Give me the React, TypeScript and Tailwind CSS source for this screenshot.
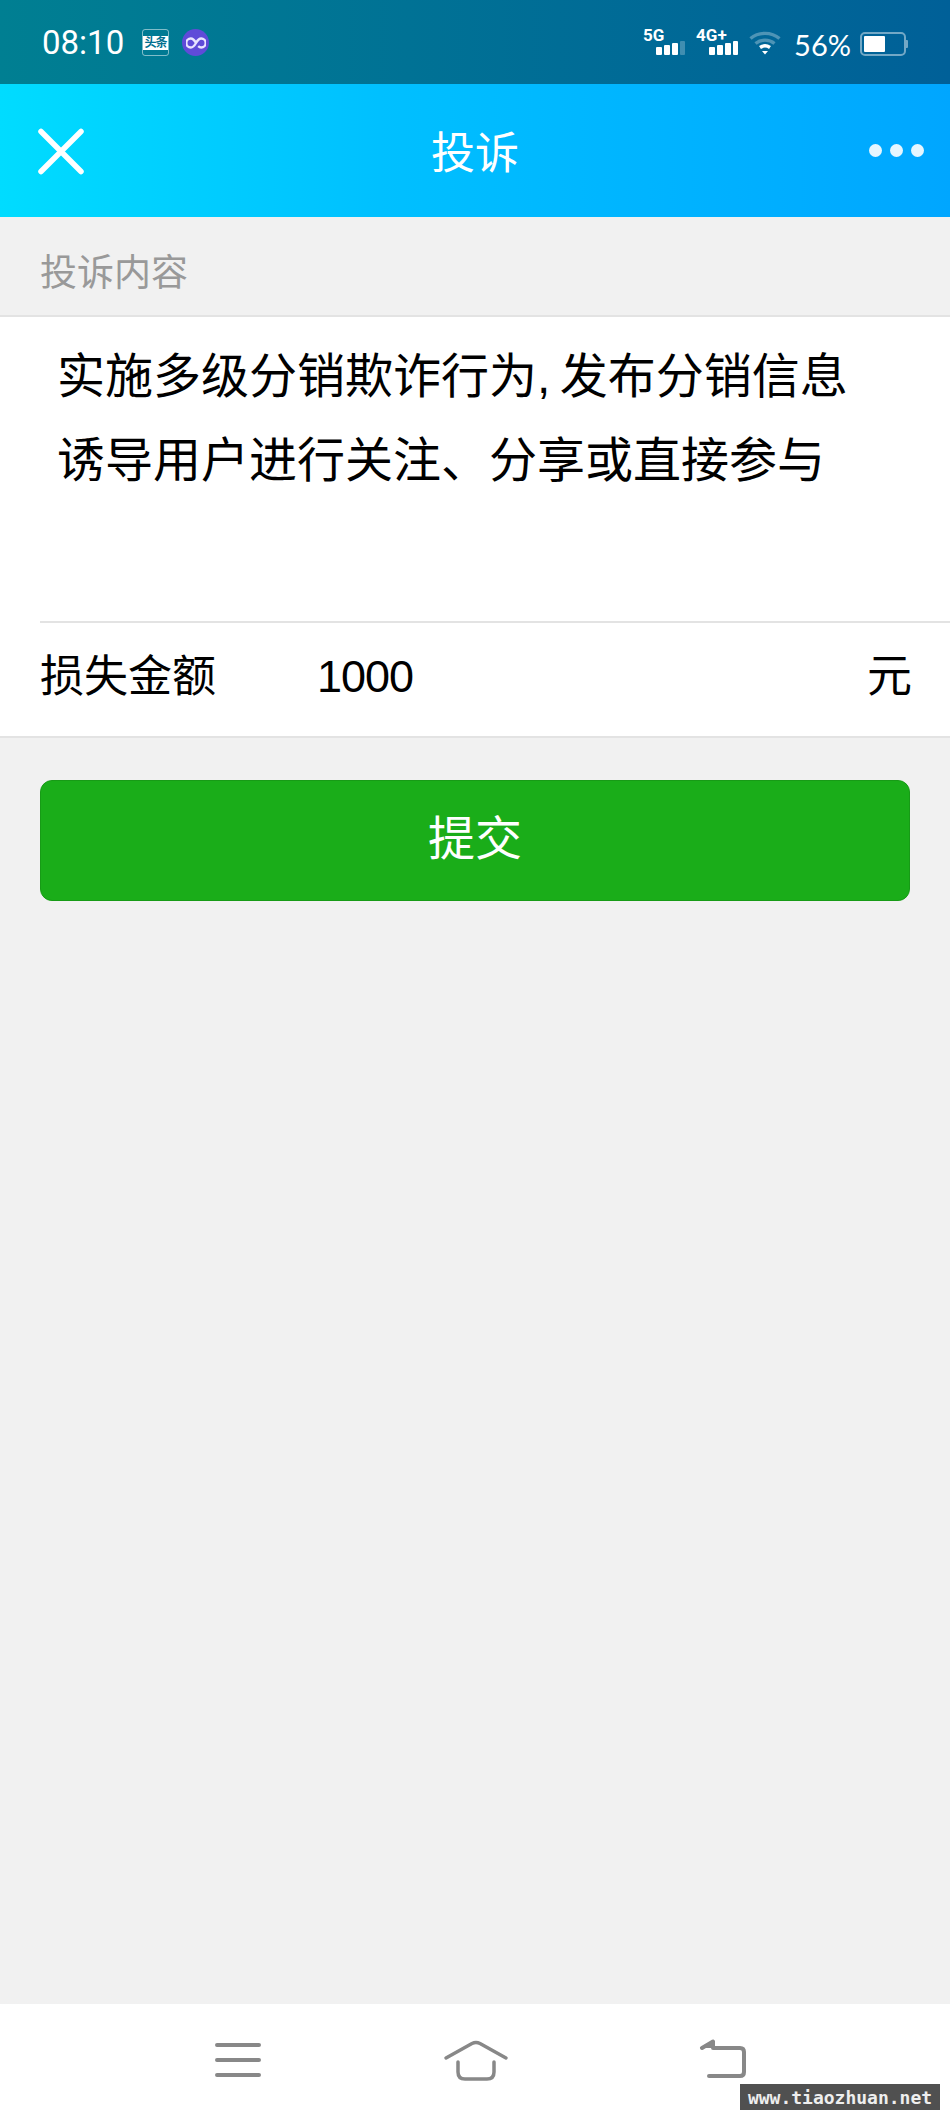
const cjk = "font-['Liberation_Sans','Noto_Sans_CJK_SC',sans-serif]"

function SignalBars({ dim }: { dim?: boolean }) {
  return (
    <div className="flex items-end gap-[2px]">
      <div className="h-[8px] w-[6px] rounded-[1px] bg-white" />
      <div className="h-[10px] w-[6px] rounded-[1px] bg-white" />
      <div className="h-[12px] w-[6px] rounded-[1px] bg-white" />
      <div className={dim ? 'h-[14px] w-[5px] rounded-[1px] bg-white/25' : 'h-[14px] w-[5px] rounded-[1px] bg-white'} />
    </div>
  )
}

function StatusBar() {
  return (
    <div className="flex h-[84px] items-start bg-gradient-to-r from-[#007f92] to-[#006098] pl-[42px] pr-[42px] pt-[29px] text-white">
      <span className="mt-[-5px] w-[100px] font-['Roboto',sans-serif] text-[33px] leading-[37px]">08:10</span>
      <div className="flex h-[27px] w-[27px] flex-col justify-center rounded-[3px] border border-white/50">
        <div className={`bg-white text-center text-[12px] font-bold leading-[14px] tracking-[-1px] text-[#006f8f] ${cjk}`}>头条</div>
      </div>
      <div className="ml-[13px] flex h-[27px] w-[27px] items-center justify-center rounded-full bg-[#5f4bd8]">
        <svg width="20" height="12" viewBox="0 0 20 12" fill="none" stroke="#e8e4ff" strokeWidth="2.4">
          <path d="M10 6C8 2.5 6.5 1.5 4.8 1.5a4.5 4.5 0 0 0 0 9C6.5 10.500 8 9.500 10 6s3.500-4.500 5.200-4.500a4.500 4.500 0 0 1 0 9c-1 0-2-.4-3-1.300" />
        </svg>
      </div>

      <div className="ml-auto flex items-start">
        <div className="relative h-[27px] w-[42px]">
          <span className="absolute left-0 top-[-4px] font-['Roboto',sans-serif] text-[17px] font-bold leading-[20px]">5G</span>
          <div className="absolute bottom-[1px] right-0"><SignalBars dim /></div>
        </div>
        <div className="relative ml-[11px] h-[27px] w-[42px]">
          <span className="absolute left-0 top-[-4px] font-['Roboto',sans-serif] text-[17px] font-bold leading-[20px]">4G+</span>
          <div className="absolute bottom-[1px] right-0"><SignalBars /></div>
        </div>
        <svg className="ml-[11px] mt-[2px]" width="32" height="24" viewBox="0 0 32 24" fill="none" stroke="#fff" strokeWidth="3.4">
          <path d="M1.500 7.500C9.500 .6 22.500 .6 30.500 7.500" strokeOpacity=".3" />
          <path d="M6.500 12.500C12 8 20 8 25.500 12.500" strokeOpacity=".3" />
          <path d="M11 16.500C14 14.500 18 14.500 21 16.500" />
          <path d="M13 20h6l-3 3.500z" fill="#fff" stroke="none" />
        </svg>
        <span className="ml-[13px] font-['Lato',sans-serif] text-[29px] leading-[32px]">56%</span>
        <div className="ml-[9px] mt-[3px] flex items-center">
          <div className="h-[24px] w-[46px] rounded-[5px] border-2 border-white/45 p-[2px]">
            <div className="h-full w-[21px] rounded-[1px] bg-white" />
          </div>
          <div className="h-[8px] w-[2px] rounded-r-[1px] bg-white/45" />
        </div>
      </div>
    </div>
  )
}

function Header() {
  return (
    <div className="relative flex h-[133px] items-center justify-between bg-gradient-to-r from-[#00dcff] via-[#00c0ff] via-40% to-[#00a6ff] pl-[36px] pr-[26px]">
      <svg width="50" height="50" viewBox="0 0 50 50" fill="none" stroke="#fff" strokeWidth="5.500" strokeLinecap="round">
        <path d="M5 5.500 45 45.500M45 5.500 5 45.500" />
      </svg>
      <span className={`absolute inset-x-0 top-[42px] text-center text-[44px] leading-[56px] text-white ${cjk}`}>投诉</span>
      <div className="flex gap-[8px]">
        <div className="h-[13px] w-[13px] rounded-full bg-[#e6f6ff]" />
        <div className="h-[13px] w-[13px] rounded-full bg-[#e6f6ff]" />
        <div className="h-[13px] w-[13px] rounded-full bg-[#e6f6ff]" />
      </div>
    </div>
  )
}

function BottomNav() {
  return (
    <div className="relative flex h-[111px] items-start bg-white pl-[214px] pt-[34px]">
      <svg width="48" height="42" viewBox="0 0 48 42" fill="none" stroke="#888" strokeWidth="4" strokeLinecap="round">
        <path d="M3 7h42M3 22h42M3 37h42" />
      </svg>
      <svg className="ml-[181px] mt-[1px]" width="66" height="44" viewBox="0 0 66 44" fill="none" stroke="#888" strokeWidth="3.500" strokeLinecap="round" strokeLinejoin="round">
        <path d="M3 19 29 4.500q4-2 8 0L63 19" />
        <path d="M15 23v10q0 7 7 7h22q7 0 7-7V23" />
      </svg>
      <svg className="ml-[189px] mt-[1px]" width="52" height="42" viewBox="0 0 52 42" fill="none" stroke="#888" strokeWidth="4" strokeLinecap="round" strokeLinejoin="round">
        <path d="M4 9 15 2.500V9H42q4 0 4 4v20q0 4-4 4H11" />
        <path d="M3 9 15 2v7z" fill="#888" stroke="none" />
      </svg>
      <div className="absolute bottom-[5px] right-[10px] flex h-[26px] w-[200px] items-center justify-center bg-[#505050] font-['DejaVu_Sans_Mono',monospace] text-[18px] font-bold text-[#eee]">
        www.tiaozhuan.net
      </div>
    </div>
  )
}

export default function App() {
  return (
    <div className={`flex h-[2115px] w-[950px] flex-col bg-[#f1f1f1] ${cjk}`}>
      <StatusBar />
      <Header />

      <div className="flex h-[98px] items-center px-[40px] pt-[15px] text-[37px] text-[#999]">投诉内容</div>

      <div className="border-y-2 border-[#e3e3e3] bg-white">
        <div className="h-[304px] pl-[57px] pt-[18px] text-[48px] leading-[84px] text-black [word-spacing:-4px]">
          实施多级分销欺诈行为, 发布分销信息
          <br />
          诱导用户进行关注、分享或直接参与
        </div>
        <div className="ml-[40px] h-[2px] bg-[#e3e3e3]" />
        <div className="flex h-[113px] items-center pb-[5px] pl-[40px] pr-[38px] text-black">
          <span className="w-[277px] text-[44px]">损失金额</span>
          <span className="font-['Liberation_Sans',sans-serif] text-[45px] tracking-[-1px]">1000</span>
          <span className="ml-auto text-[45px]">元</span>
        </div>
      </div>

      <button
        type="button"
        className="mx-[40px] mt-[42px] h-[121px] rounded-[12px] border border-[#179b16] bg-[#1aad19] pb-[2px] text-[47px] text-white"
      >
        提交
      </button>

      <div className="flex-1" />
      <BottomNav />
    </div>
  )
}
